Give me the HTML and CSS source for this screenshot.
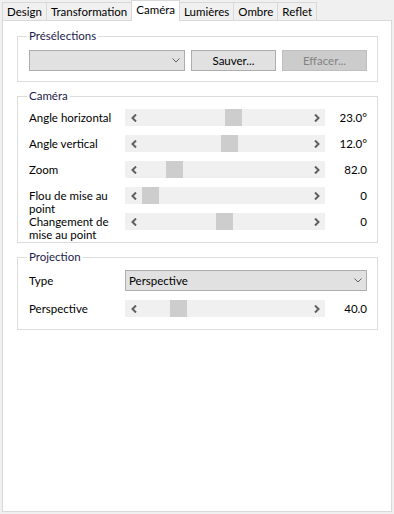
FILE: index.html
```html
<!DOCTYPE html>
<html lang="fr">
<head>
    <meta charset="UTF-8">
    <meta name="viewport" content="width=device-width, initial-scale=1.0">
    <title>Caméra</title>
    <link rel="stylesheet" href="styles.css">
</head>
<body>
    <div class="tabs">
        <div class="tab">Design</div>
        <div class="tab">Transformation</div>
        <div class="tab active">Caméra</div>
        <div class="tab">Lumières</div>
        <div class="tab">Ombre</div>
        <div class="tab">Reflet</div>
    </div>

    <div class="panel">
        <!-- Présélections -->
        <fieldset class="group presets">
            <legend>Présélections</legend>
            <div class="preset-row">
                <div class="combo">
                    <span></span>
                    <svg class="drop" width="8" height="5" viewBox="0 0 8 5"><path d="M0.5 0.5 L4 4 L7.5 0.5"/></svg>
                </div>
                <button class="btn">Sauver...</button>
                <button class="btn" disabled>Effacer...</button>
            </div>
        </fieldset>

        <!-- Caméra -->
        <fieldset class="group">
            <legend>Caméra</legend>
            <div class="rows">
                <div class="label">Angle horizontal</div>
                <div class="slider">
                    <span class="arrow"><svg width="6" height="8" viewBox="0 0 6 8"><path d="M5 0.5 L1.5 4 L5 7.5"/></svg></span>
                    <div class="track"><div class="thumb" style="margin-left: 83px"></div></div>
                    <span class="arrow"><svg width="6" height="8" viewBox="0 0 6 8"><path d="M1 0.5 L4.5 4 L1 7.5"/></svg></span>
                </div>
                <div class="value">23.0°</div>

                <div class="label">Angle vertical</div>
                <div class="slider">
                    <span class="arrow"><svg width="6" height="8" viewBox="0 0 6 8"><path d="M5 0.5 L1.5 4 L5 7.5"/></svg></span>
                    <div class="track"><div class="thumb" style="margin-left: 79px"></div></div>
                    <span class="arrow"><svg width="6" height="8" viewBox="0 0 6 8"><path d="M1 0.5 L4.5 4 L1 7.5"/></svg></span>
                </div>
                <div class="value">12.0°</div>

                <div class="label">Zoom</div>
                <div class="slider">
                    <span class="arrow"><svg width="6" height="8" viewBox="0 0 6 8"><path d="M5 0.5 L1.5 4 L5 7.5"/></svg></span>
                    <div class="track"><div class="thumb" style="margin-left: 24px"></div></div>
                    <span class="arrow"><svg width="6" height="8" viewBox="0 0 6 8"><path d="M1 0.5 L4.5 4 L1 7.5"/></svg></span>
                </div>
                <div class="value">82.0</div>

                <div class="label multi">Flou de mise au point</div>
                <div class="slider">
                    <span class="arrow"><svg width="6" height="8" viewBox="0 0 6 8"><path d="M5 0.5 L1.5 4 L5 7.5"/></svg></span>
                    <div class="track"><div class="thumb" style="margin-left: 0px"></div></div>
                    <span class="arrow"><svg width="6" height="8" viewBox="0 0 6 8"><path d="M1 0.5 L4.5 4 L1 7.5"/></svg></span>
                </div>
                <div class="value">0</div>

                <div class="label multi">Changement de mise au point</div>
                <div class="slider">
                    <span class="arrow"><svg width="6" height="8" viewBox="0 0 6 8"><path d="M5 0.5 L1.5 4 L5 7.5"/></svg></span>
                    <div class="track"><div class="thumb" style="margin-left: 74px"></div></div>
                    <span class="arrow"><svg width="6" height="8" viewBox="0 0 6 8"><path d="M1 0.5 L4.5 4 L1 7.5"/></svg></span>
                </div>
                <div class="value">0</div>
            </div>
        </fieldset>

        <!-- Projection -->
        <fieldset class="group">
            <legend>Projection</legend>
            <div class="rows">
                <div class="label">Type</div>
                <div class="combo wide">
                    <span>Perspective</span>
                    <svg class="drop" width="8" height="5" viewBox="0 0 8 5"><path d="M0.5 0.5 L4 4 L7.5 0.5"/></svg>
                </div>

                <div class="label">Perspective</div>
                <div class="slider">
                    <span class="arrow"><svg width="6" height="8" viewBox="0 0 6 8"><path d="M5 0.5 L1.5 4 L5 7.5"/></svg></span>
                    <div class="track"><div class="thumb" style="margin-left: 28px"></div></div>
                    <span class="arrow"><svg width="6" height="8" viewBox="0 0 6 8"><path d="M1 0.5 L4.5 4 L1 7.5"/></svg></span>
                </div>
                <div class="value">40.0</div>
            </div>
        </fieldset>
    </div>
</body>
</html>
```

FILE: styles.css
```css
body {
    margin: 0;
    background: #f0f0f0;
    font-family: "Segoe UI", Lato, "Noto Sans", sans-serif;
    font-size: 11.5px;
    color: #000;
}

.tabs {
    display: flex;
    align-items: flex-end;
    height: 20px;
    padding-left: 2px;
}

.tab {
    box-sizing: border-box;
    height: 18px;
    padding: 1px 4px 0;
    line-height: 15px;
    border: 1px solid #d9d9d9;
    border-bottom: none;
    margin-right: -1px;
    background: #f0f0f0;
}

.tab.active {
    position: relative;
    z-index: 1;
    height: 21px;
    margin-bottom: -1px;
    background: #fff;
}

.panel {
    box-sizing: border-box;
    height: 492px;
    margin: 0 2px 0 2px;
    border: 1px solid #d9d9d9;
    background: #fff;
    padding-top: 1px;
}

.group {
    margin: 6px 13px 0 14px;
    padding: 5px 10px 12px 11px;
    border: 1px solid #dcdcdc;
    min-width: 0;
}

.group.presets {
    margin-top: 6px;
    padding-top: 6px;
    padding-bottom: 10px;
}

.group legend {
    padding: 0 2px;
    margin-left: -2px;
    line-height: 16px;
    color: #1c1c4c;
}

.preset-row {
    display: grid;
    grid-template-columns: 156px 85px 85px;
    column-gap: 6px;
}

.combo {
    box-sizing: border-box;
    height: 21px;
    display: flex;
    align-items: center;
    justify-content: space-between;
    padding: 0 4px 0 3px;
    border: 1px solid #adadad;
    background: #e1e1e1;
    line-height: 16px;
}

.combo.wide {
    grid-column: 2 / 4;
}

.drop path {
    fill: none;
    stroke: #606060;
    stroke-width: 1;
}

.btn {
    box-sizing: border-box;
    height: 21px;
    padding: 0;
    font: inherit;
    color: #000;
    background: #e1e1e1;
    border: 1px solid #adadad;
}

.btn:disabled {
    background: #cccccc;
    border-color: #bfbfbf;
    color: #838383;
}

.rows {
    display: grid;
    grid-template-columns: 96px 200px 1fr;
    row-gap: 9px;
    align-items: center;
}

.label {
    line-height: 16px;
}

.label.multi {
    align-self: start;
    height: 15px;
    margin-top: 2px;
    line-height: 13px;
}

.slider {
    display: flex;
    height: 17px;
    background: #f0f0f0;
}

.arrow {
    width: 17px;
    display: flex;
    align-items: center;
    justify-content: center;
}

.arrow path {
    fill: none;
    stroke: #606060;
    stroke-width: 2;
}

.track {
    flex: 1;
    display: flex;
}

.thumb {
    width: 17px;
    height: 17px;
    background: #cdcdcd;
}

.value {
    text-align: right;
    line-height: 16px;
}
```
